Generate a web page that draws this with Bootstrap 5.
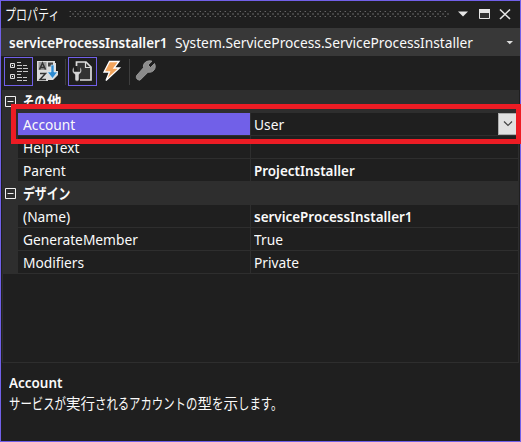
<!DOCTYPE html>
<html lang="ja">
<head>
<meta charset="utf-8">
<meta name="viewport" content="width=device-width, initial-scale=1">
<title>プロパティ</title>
<link href="https://cdn.jsdelivr.net/npm/bootstrap@5.3.0/dist/css/bootstrap.min.css" rel="stylesheet">
<style>
body{margin:0;background:#1f1f1f;color:#fafafa;font:15px/22px "Noto Sans","Noto Sans CJK JP",sans-serif;overflow:hidden}
svg{display:block;flex:none}
.panel{width:521px;height:442px;border:1px solid #7160e8;background:#1f1f1f}
.jp{font-family:"Noto Sans CJK JP",sans-serif}
.kana{display:inline-block;transform:scaleX(.76);transform-origin:0 50%;white-space:nowrap}
.t,.tb{display:inline-block;transform-origin:0 50%;white-space:nowrap;transform:scaleX(.917)}
.tb{transform:scaleX(.896);font-weight:600}
.titlebar{height:27px;padding-left:4px}
.titlebar .kana{width:64px;font-size:14.5px;margin-top:-2px}
.objsel{height:28px;background:#383838;padding-left:8px}
.objsel .tb{width:166px}
.picker{right:6px}
.tools{height:34px;padding:1px 0 0 3px}
.tool{width:29px;height:29px;border:1px solid transparent;flex:none}
.tool.on{border-color:#7160e8}
.sep{width:1px;height:26px;background:#3d3d3d;margin:2px 2px 0 3px;flex:none}
.sep.near{margin-left:2px}
.gap1{margin-left:1px}
.pgrid{margin:0 1px;height:273px;border:1px solid #2e2e2e;border-width:0 1px 1px}
.cat{height:23px;background:#2e2e2e;padding-left:2px;font-weight:600}
.cat svg{margin-right:7px}
.cat .jp{margin-top:-2px}
.cat .wide{transform:scaleX(.79)}
.prow{height:23px;padding-left:15px;background:#2e2e2e}
.pname,.pval{height:22px;background:#1f1f1f;white-space:nowrap}
.pname{width:232px;padding-left:5px}
.pval{margin-left:1px;padding-left:3px}
.pname.sel{background:#7160e8}
.drop{width:20px;height:22px;background:#e1e1e1;border:1px solid #adadad}
.hilite{left:10px;top:103px;width:510px;height:40px;border:5px solid #ed1c24}
.desc{padding:8px 0 0 8px}
.desc span{flex:none}
.desc .jp{margin-top:-1px}
.k5{width:57px}.k3{width:34px}.k2{width:24px}.k1{width:11.5px}
.kanji{font-size:14.5px}
</style>
</head>
<body>
<div class="panel position-relative">
  <div class="titlebar d-flex align-items-center">
    <span class="jp kana">プロパティ</span>
    <svg width="380" height="27"><defs><pattern id="grip" width="5" height="27" patternUnits="userSpaceOnUse"><path d="M1 10h1v1H1zM1 15h1v1H1z" fill="#666"/><path d="M3 12h2v2H3z" fill="#444"/><path d="M0 10h1v1H0zM0 15h1v1H0z" fill="#3c3c3c"/></pattern></defs><rect width="380" height="27" fill="url(#grip)"/></svg>
    <svg width="70" height="27" viewBox="449 1 70 27"><path d="M458 11.500h10l-5 5z" fill="#e6e6e6"/><path d="M479.500 9.500h10v9h-10z" fill="#333" stroke="#e6e6e6"/><path d="M479 9h11v4h-11z" fill="#e6e6e6"/><path d="M500 9.500l10 9.500M510 9.500l-10 9.500" stroke="#e6e6e6" stroke-width="1.600"/></svg>
  </div>
  <div class="objsel d-flex align-items-center">
    <span class="tb">serviceProcessInstaller1</span><span class="t">System.ServiceProcess.ServiceProcessInstaller</span>
    <svg class="picker position-absolute" width="8" height="5"><path d="M.5 1h6.500L3.750 4.300z" fill="#ddd"/></svg>
  </div>
  <div class="tools d-flex align-items-start">
    <div class="tool on"><svg width="27" height="27" viewBox="5 59 27 27"><path d="M10.500 64.500h4v4h-4zM10.500 75.500h4v4h-4z" fill="#333" stroke="#ddd"/><path d="M12 66.500h1M12 77.500h1" stroke="#fff"/><path d="M17 63.500h4M17 66.500h5M17 69.500h5M17 72.500h5M17 75.500h4M17 78.500h5M17 81.500h5M23 66.500h4M23 69.500h5M23 72.500h5M23 78.500h4M23 81.500h4" stroke="#c8c8c8"/></svg></div>
    <div class="tool"><svg width="27" height="27" viewBox="34 59 27 27"><path d="M37 62h18v2h1v8h2v4l-5 5h-5v1H37z" fill="#dcdcdc"/><path d="M38.500 63h8v8h-8z" fill="#999"/><path d="M39.500 70.500l3-6.500 3 6.500M40.500 68.500h4M40 74.500h5.500l-5.500 6h6" fill="none" stroke="#333" stroke-width="1.500"/><path d="M48 63.500h5v4h-5z" fill="#444"/><path d="M51 66h3v7h3.500l-5 6.500-5-6.500H51z" fill="#2d8ad0" stroke="#e8f3ff" stroke-width=".6"/></svg></div>
    <div class="sep"></div>
    <div class="tool on"><svg width="27" height="27" viewBox="69 59 27 27"><path d="M76.500 67v-4h9.500l5 5V81H80" fill="#333" stroke="#ddd" stroke-width="1.700"/><path d="M85.500 63v5.500h5" fill="none" stroke="#ddd" stroke-width="1.200"/><path d="M74 68c-3 3-1.500 6 1 7.500V81q2 2.500 4 0v-5.500c2.500-1.500 4-4.500 1-7.500v4.500h-6z" fill="#d6d6d6" stroke="#222" stroke-width=".5"/></svg></div>
    <div class="tool gap1"><svg width="27" height="27" viewBox="99 59 27 27"><path d="M109.500 62.500h9.500l-5 6.500h5.500L106 81.500l3.500-8.500h-5.500z" fill="#f2a45c" stroke="#fff" stroke-width="1.300"/></svg></div>
    <div class="sep near"></div>
    <div class="tool"><svg width="27" height="27" viewBox="133 59 27 27"><path d="M154.500 64.500l-4 4-2.500-2.500 4-3.800c-5-1.500-9.500 2-8.500 6.500l-7 8q-1 4 3.500 4.500l8-8c5 1 9-4 6.500-8.700z" fill="#8b8b8b" stroke="#a5a5a5" stroke-width=".8"/></svg></div>
  </div>
  <div class="pgrid">
    <div class="cat d-flex align-items-center"><svg width="11" height="11"><path d="M.5.5h10v10H.5zM2.500 5.500h6" fill="none" stroke="#f0f0f0"/></svg><span class="jp kana k2">その</span><span class="jp kanji">他</span></div>
    <div class="prow d-flex"><div class="pname sel"><span class="t">Account</span></div><div class="pval flex-fill d-flex justify-content-between"><span class="t">User</span><div class="drop"><svg width="18" height="20"><path d="M5 7.500l4 4 4-4" fill="none" stroke="#444" stroke-width="1.200"/></svg></div></div></div>
    <div class="prow d-flex"><div class="pname"><span class="t">HelpText</span></div><div class="pval flex-fill"></div></div>
    <div class="prow d-flex"><div class="pname"><span class="t">Parent</span></div><div class="pval flex-fill"><span class="tb">ProjectInstaller</span></div></div>
    <div class="cat d-flex align-items-center"><svg width="11" height="11"><path d="M.5.5h10v10H.5zM2.500 5.500h6" fill="none" stroke="#f0f0f0"/></svg><span class="jp kana wide">デザイン</span></div>
    <div class="prow d-flex"><div class="pname"><span class="t">(Name)</span></div><div class="pval flex-fill"><span class="tb">serviceProcessInstaller1</span></div></div>
    <div class="prow d-flex"><div class="pname"><span class="t">GenerateMember</span></div><div class="pval flex-fill"><span class="t">True</span></div></div>
    <div class="prow d-flex"><div class="pname"><span class="t">Modifiers</span></div><div class="pval flex-fill"><span class="t">Private</span></div></div>
  </div>
  <div class="desc">
    <div><span class="tb">Account</span></div>
    <div class="jp d-flex"><span class="kana k5">サービスが</span><span class="kanji">実行</span><span class="kana k3">される</span><span class="kana k5">アカウント</span><span class="kana k1">の</span><span class="kanji">型</span><span class="kana k1">を</span><span class="kanji">示</span><span class="kana">します。</span></div>
  </div>
  <div class="hilite position-absolute"></div>
</div>
<script src="https://cdn.jsdelivr.net/npm/bootstrap@5.3.0/dist/js/bootstrap.bundle.min.js"></script>
</body>
</html>
